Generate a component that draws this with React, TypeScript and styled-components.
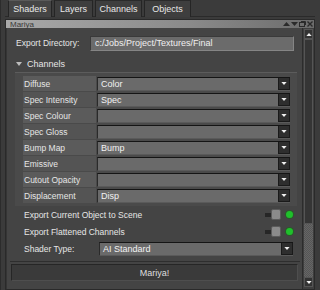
import styled, {createGlobalStyle} from "styled-components";

const GlobalStyle = createGlobalStyle`
  html, body {
    margin: 0;
    padding: 0;
    background: #3b3b3b;
  }
  * {
    box-sizing: border-box;
  }
`;

const Window = styled.div`
  width: 320px;
  height: 290px;
  overflow: hidden;
  background: #3b3b3b;
  font-family: "Liberation Sans", Arial, sans-serif;
  font-size: 8.5px;
  color: #e6e6e6;
  display: flex;
  flex-direction: column;
  padding: 0 5px 0 4px;
  border-left: 1px solid #2c2c2c;
`;

const TabBar = styled.div`
  display: flex;
  height: 17px;
  padding-left: 3px;
  border-bottom: 1px solid #2a2a2a;
`;

const Tab = styled.div<{$active?: boolean; $width: number}>`
  display: flex;
  align-items: center;
  justify-content: center;
  width: ${p => p.$width}px;
  height: 17px;
  margin-right: 2px;
  background: ${p => (p.$active ? "#454545" : "#3e3e3e")};
  border: 1px solid #252525;
  border-bottom: none;
  border-top-color: ${p => (p.$active ? "#5a5a5a" : "#2a2a2a")};
  font-size: 9px;
  color: #e8e8e8;
`;

const Panel = styled.div`
  flex: 1;
  display: flex;
  flex-direction: column;
  margin-top: 2px;
  border: 1px solid #2a2a2a;
  background: #444;
`;

const TitleBar = styled.div`
  height: 8px;
  display: flex;
  align-items: center;
  justify-content: space-between;
  background: linear-gradient(to right, #a9a9a9, #8a8a8a 60%, #6c6c6c);
  color: #3a3a3a;
  font-size: 8px;
  padding-left: 4px;
  padding-right: 1px;
`;

const TitleIcons = styled.div`
  display: flex;
  gap: 1px;
  align-items: center;
`;

const Body = styled.div`
  flex: 1;
  display: flex;
  min-height: 0;
`;

const Content = styled.div`
  flex: 1;
  display: flex;
  flex-direction: column;
  padding: 4px 2px 0 3px;
  border-left: 1px solid #353535;
`;

const DirRow = styled.div`
  display: flex;
  align-items: center;
  height: 18px;
  margin-top: 2px;
  padding-left: 6px;
`;

const DirLabel = styled.div`
  width: 74px;
`;

const TextField = styled.div`
  flex: 1;
  height: 15px;
  margin-right: 6px;
  display: flex;
  align-items: center;
  padding-left: 4px;
  background: #6b6b6b;
  border: 1px solid #3a3a3a;
  border-bottom-color: #858585;
  border-right-color: #858585;
  font-size: 9px;
  color: #f0f0f0;
`;

const SectionHeader = styled.div`
  display: flex;
  align-items: center;
  gap: 5px;
  height: 13px;
  margin-top: 5px;
  padding-left: 6px;
  font-size: 9px;
`;

const Triangle = styled.span`
  width: 0;
  height: 0;
  border-left: 3px solid transparent;
  border-right: 3px solid transparent;
  border-top: 4px solid #bdbdbd;
`;

const Group = styled.div`
  display: flex;
  flex-direction: column;
  margin: 2px 3px 0 5px;
  padding: 3px 7px 2px 8px;
  background: #4a4a4a;
  border-top: 1px solid #5c5c5c;
`;

const ChannelRow = styled.div`
  display: flex;
  height: 16px;
  align-items: center;
`;

const RowLabel = styled.div<{$odd: boolean}>`
  width: 73px;
  height: 16px;
  display: flex;
  align-items: center;
  padding-left: 1px;
  background: ${p => (p.$odd ? "#545454" : "#5b5b5b")};
  border-bottom: 1px solid #4a4a4a;
`;

const Combo = styled.div`
  flex: 1;
  height: 14px;
  display: flex;
  align-items: stretch;
  background: #6a6a6a;
  border-top: 1px solid #151515;
  border-left: 1px solid #2a2a2a;
  border-bottom: 1px solid #5a5a5a;
  margin-left: 1px;
`;

const ComboText = styled.div`
  flex: 1;
  display: flex;
  align-items: center;
  padding-left: 3px;
  font-size: 9px;
  color: #f2f2f2;
`;

const ArrowButton = styled.div`
  width: 12px;
  display: flex;
  align-items: center;
  justify-content: center;
  background: #2e2e2e;
  border: 1px solid #1a1a1a;
  border-top: none;
`;

const CheckRow = styled.div`
  display: flex;
  align-items: center;
  height: 17px;
  padding-left: 14px;
  padding-right: 7px;
`;

const CheckLabel = styled.div`
  flex: 1;
`;

const Toggle = styled.div`
  display: flex;
  align-items: center;
`;

const ToggleTrack = styled.div`
  width: 6px;
  height: 4px;
  background: #262626;
`;

const ToggleKnob = styled.div`
  width: 10px;
  height: 11px;
  border-radius: 2px;
  background: #8a8a8a;
  border: 1px solid #5a5a5a;
`;

const Led = styled.div`
  width: 7px;
  height: 7px;
  margin-left: 5px;
  border-radius: 50%;
  background: #1fc02b;
  box-shadow: 0 0 0 1px #2a5a2a;
`;

const ShaderRow = styled.div`
  display: flex;
  align-items: center;
  height: 17px;
  padding-left: 14px;
  padding-right: 7px;
`;

const ShaderLabel = styled.div`
  width: 74px;
`;

const Footer = styled.div`
  margin-top: 4px;
  border-top: 1px solid #2e2e2e;
  padding: 2px 2px 0 1px;
`;

const Button = styled.div`
  height: 17px;
  display: flex;
  align-items: center;
  justify-content: center;
  background: #3a3a3a;
  border: 1px solid #262626;
  border-bottom-color: #4e4e4e;
  border-right-color: #4e4e4e;
  font-size: 9px;
  color: #dedede;
`;

const ScrollBar = styled.div`
  width: 12px;
  display: flex;
  flex-direction: column;
  border-left: 1px solid #2c2c2c;
  background: #3e3e3e;
`;

const ScrollBtn = styled.div<{$bottom?: boolean}>`
  height: 10px;
  display: flex;
  align-items: center;
  justify-content: center;
  background: #333;
  border: 1px solid #555;
  margin: ${p => (p.$bottom ? "0 1px 2px" : "1px 1px 0")};
`;

const Thumb = styled.div`
  height: 185px;
  background: #353535;
  border: 1px solid #555;
  margin: 0 1px;
`;

const Track = styled.div`
  flex: 1;
  margin: 0 1px;
  background-color: #5c5c5c;
  background-image: repeating-conic-gradient(#666 0 25%, #555 0 50%);
  background-size: 2px 2px;
`;

const Tri = ({up, color = "#f0f0f0", w = 7}: {up?: boolean; color?: string; w?: number}) => (
  <svg width={w} height={w - 3} viewBox="0 0 7 4">
    <path d={up ? "M0 4 L3.5 0 L7 4 Z" : "M0 0 L7 0 L3.5 4 Z"} fill={color}/>
  </svg>
);

const channels: [string, string][] = [
  ["Diffuse", "Color"],
  ["Spec Intensity", "Spec"],
  ["Spec Colour", ""],
  ["Spec Gloss", ""],
  ["Bump Map", "Bump"],
  ["Emissive", ""],
  ["Cutout Opacity", ""],
  ["Displacement", "Disp"],
];

const tabs = [
  {name: "Shaders", width: 44},
  {name: "Layers", width: 39},
  {name: "Channels", width: 47},
  {name: "Objects", width: 47},
];

const toggles = ["Export Current Object to Scene", "Export Flattened Channels"];

export default function App() {
  return (
    <>
      <GlobalStyle/>
      <Window>
        <TabBar>
          {tabs.map((t, i) => (
            <Tab key={t.name} $active={i === 0} $width={t.width}>{t.name}</Tab>
          ))}
        </TabBar>
        <Panel>
          <TitleBar>
            <span>Mariya</span>
            <TitleIcons>
              <Tri up color="#2a2a2a"/>
              <Tri color="#2a2a2a"/>
              <svg width="7" height="6" viewBox="0 0 7 6">
                <rect x="0.5" y="1.5" width="5" height="4" fill="none" stroke="#2a2a2a"/>
                <path d="M2 0.5 H6.5 V4" fill="none" stroke="#2a2a2a"/>
              </svg>
              <svg width="6" height="6" viewBox="0 0 6 6">
                <path d="M0.5 0.5 L5.5 5.5 M5.5 0.5 L0.5 5.5" stroke="#2a2a2a" strokeWidth="1.4"/>
              </svg>
            </TitleIcons>
          </TitleBar>
          <Body>
            <Content>
              <DirRow>
                <DirLabel>Export Directory:</DirLabel>
                <TextField>c:/Jobs/Project/Textures/Final</TextField>
              </DirRow>
              <SectionHeader>
                <Triangle/>
                <span>Channels</span>
              </SectionHeader>
              <Group>
                {channels.map(([label, value], i) => (
                  <ChannelRow key={label}>
                    <RowLabel $odd={i % 2 === 1}>{label}</RowLabel>
                    <Combo>
                      <ComboText>{value}</ComboText>
                      <ArrowButton><Tri w={6}/></ArrowButton>
                    </Combo>
                  </ChannelRow>
                ))}
              </Group>
              {toggles.map(t => (
                <CheckRow key={t}>
                  <CheckLabel>{t}</CheckLabel>
                  <Toggle><ToggleTrack/><ToggleKnob/></Toggle>
                  <Led/>
                </CheckRow>
              ))}
              <ShaderRow>
                <ShaderLabel>Shader Type:</ShaderLabel>
                <Combo>
                  <ComboText>AI Standard</ComboText>
                  <ArrowButton><Tri w={6}/></ArrowButton>
                </Combo>
              </ShaderRow>
              <Footer>
                <Button>Mariya!</Button>
              </Footer>
            </Content>
            <ScrollBar>
              <ScrollBtn><Tri up w={6}/></ScrollBtn>
              <Thumb/>
              <Track/>
              <ScrollBtn $bottom><Tri w={6}/></ScrollBtn>
            </ScrollBar>
          </Body>
        </Panel>
      </Window>
    </>
  );
}
